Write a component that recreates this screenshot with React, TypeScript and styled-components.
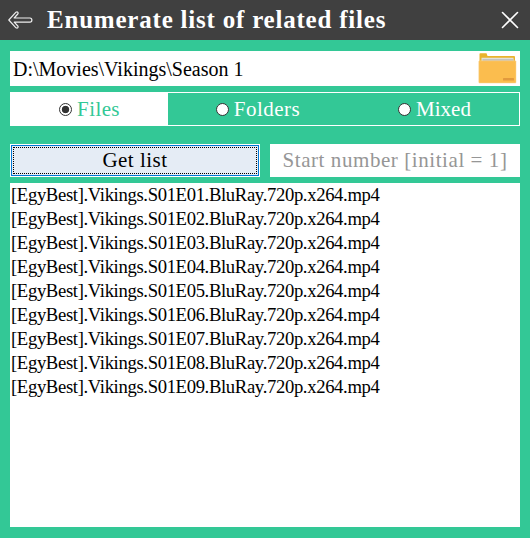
import React from "react";
import styled, { createGlobalStyle, css } from "styled-components";

const GREEN = "#33c896";

const GlobalStyle = createGlobalStyle`
  * { box-sizing: border-box; }
  html, body { margin: 0; padding: 0; background: ${GREEN}; overflow: hidden; }
`;

const Window = styled.div`
  width: 530px;
  height: 538px;
  display: flex;
  flex-direction: column;
  background: ${GREEN};
  color: #000;
  font-family: "Liberation Serif", "Times New Roman", serif;
`;

const TitleBar = styled.header`
  height: 40px;
  flex: none;
  display: flex;
  align-items: center;
  padding: 0 10px 0 7px;
  background: #404040;
  color: #fff;
`;

const Title = styled.h1`
  margin: 0 auto 0 14px;
  font-size: 25px;
  line-height: 40px;
  font-weight: 700;
  white-space: nowrap;
  letter-spacing: 0.79px;
`;

const IconButton = styled.button`
  display: flex;
  padding: 0;
  border: 0;
  background: none;
`;

const Content = styled.main`
  flex: 1;
  display: flex;
  flex-direction: column;
  padding: 11px 10px;
`;

const PathBar = styled.div`
  height: 35px;
  display: flex;
  align-items: center;
  justify-content: space-between;
  padding: 0 3px;
  background: #fff;
`;

const PathText = styled.span`
  padding-top: 1px;
  font-size: 20px;
  white-space: nowrap;
`;

const Tabs = styled.div`
  height: 34px;
  margin-top: 6px;
  display: grid;
  grid-template-columns: 157px 180px 1fr;
  border: 1px solid #fff;
`;

const Tab = styled.label<{ $active?: boolean }>`
  display: flex;
  align-items: center;
  justify-content: center;
  gap: 5px;
  color: #fff;
  font-size: 21px;
  line-height: 32px;
  ${(p) => p.$active && css`background: #fff; color: ${GREEN};`}
  &:last-child { padding-left: 2px; }
`;

const TabText = styled.span<{ $spacing: number }>`
  letter-spacing: ${(p) => p.$spacing}px;
`;

const Radio = styled.span<{ $checked?: boolean }>`
  width: 13px;
  height: 13px;
  border: 1px solid #333;
  border-radius: 50%;
  background: ${(p) => (p.$checked ? "radial-gradient(circle, #333 0 3.4px, #fff 4.1px)" : "#fff")};
`;

const Controls = styled.div`
  height: 33px;
  margin-top: 18px;
  display: grid;
  grid-template-columns: 250px 250px;
  gap: 10px;
`;

const GetButton = styled.button`
  padding: 2px;
  border: 1px solid #fff;
  background: #e5ecf5;
  box-shadow: inset 0 0 0 1px #0078d7;
  font-family: inherit;
  font-size: 21px;
  color: #000;
`;

const FocusArea = styled.span`
  display: flex;
  height: 100%;
  align-items: center;
  justify-content: center;
  border: 1px dotted #000;
  letter-spacing: 0.5px;
`;

const NumberInput = styled.input`
  width: 250px;
  height: 33px;
  padding: 0;
  border: 0;
  border-radius: 0;
  background: #fff;
  text-align: center;
  font-family: inherit;
  font-size: 21px;
  letter-spacing: 0.57px;
  outline: 0;
  &::placeholder { color: #969696; opacity: 1; }
`;

const FileList = styled.ul`
  flex: 1;
  margin: 6px 0 0;
  padding: 0 1px;
  list-style: none;
  background: #fff;
  font-size: 18.67px;
  letter-spacing: -0.35px;
`;

const FileRow = styled.li`
  height: 24px;
  line-height: 24px;
  white-space: nowrap;
`;

const BackIcon = () => (
  <svg width="26" height="22" viewBox="0 0 26 22" fill="none" stroke="#eee" strokeWidth="1.2" strokeLinejoin="round">
    <path d="M9 3.2 1.8 11 9 18.8c1.7.9 2.7-.8 1.8-1.8L7.2 13.2H23c2.5 0 2.5-4.2 0-4.2H7.2L10.8 5C11.7 4 10.7 2.3 9 3.2Z" />
  </svg>
);

const CloseIcon = () => (
  <svg width="20" height="20" viewBox="0 0 20 20" stroke="#fff" strokeWidth="1.6" strokeLinecap="round">
    <path d="m2.5 2.5 15 15m0-15-15 15" />
  </svg>
);

const FolderIcon = () => (
  <svg width="39" height="33" viewBox="0 0 39 33">
    <path d="M1.5 2Q1.5 1.2 2.3 1.2H8.5L9.5 4H36q1 0 1 1v6H1.5Z" fill="#e9b32c" />
    <path d="M3.5 5.8h32v3.5h-32Z" fill="#e4e1d5" />
    <path d="M4.5 7h31v2.5h-31Z" fill="#c3c3c1" />
    <rect x="0.8" y="8.8" width="37.2" height="22.2" rx="0.7" fill="#fbbd4e" stroke="#fbd696" strokeWidth="0.5" />
    <rect x="25" y="26" width="11" height="2.6" rx="0.6" fill="#e29a3d" />
  </svg>
);

const files = Array.from({ length: 9 }, (_, i) => `[EgyBest].Vikings.S01E0${i + 1}.BluRay.720p.x264.mp4`);

export default function App() {
  return (
    <Window>
      <GlobalStyle />
      <TitleBar>
        <IconButton aria-label="Back"><BackIcon /></IconButton>
        <Title>Enumerate list of related files</Title>
        <IconButton aria-label="Close"><CloseIcon /></IconButton>
      </TitleBar>
      <Content>
        <PathBar>
          <PathText>D:\Movies\Vikings\Season 1</PathText>
          <IconButton aria-label="Browse"><FolderIcon /></IconButton>
        </PathBar>
        <Tabs>
          <Tab $active><Radio $checked /><TabText $spacing={0.4}>Files</TabText></Tab>
          <Tab><Radio /><TabText $spacing={0.5}>Folders</TabText></Tab>
          <Tab><Radio /><TabText $spacing={0}>Mixed</TabText></Tab>
        </Tabs>
        <Controls>
          <GetButton><FocusArea>Get list</FocusArea></GetButton>
          <NumberInput placeholder="Start number [initial = 1]" />
        </Controls>
        <FileList>
          {files.map((name) => <FileRow key={name}>{name}</FileRow>)}
        </FileList>
      </Content>
    </Window>
  );
}
